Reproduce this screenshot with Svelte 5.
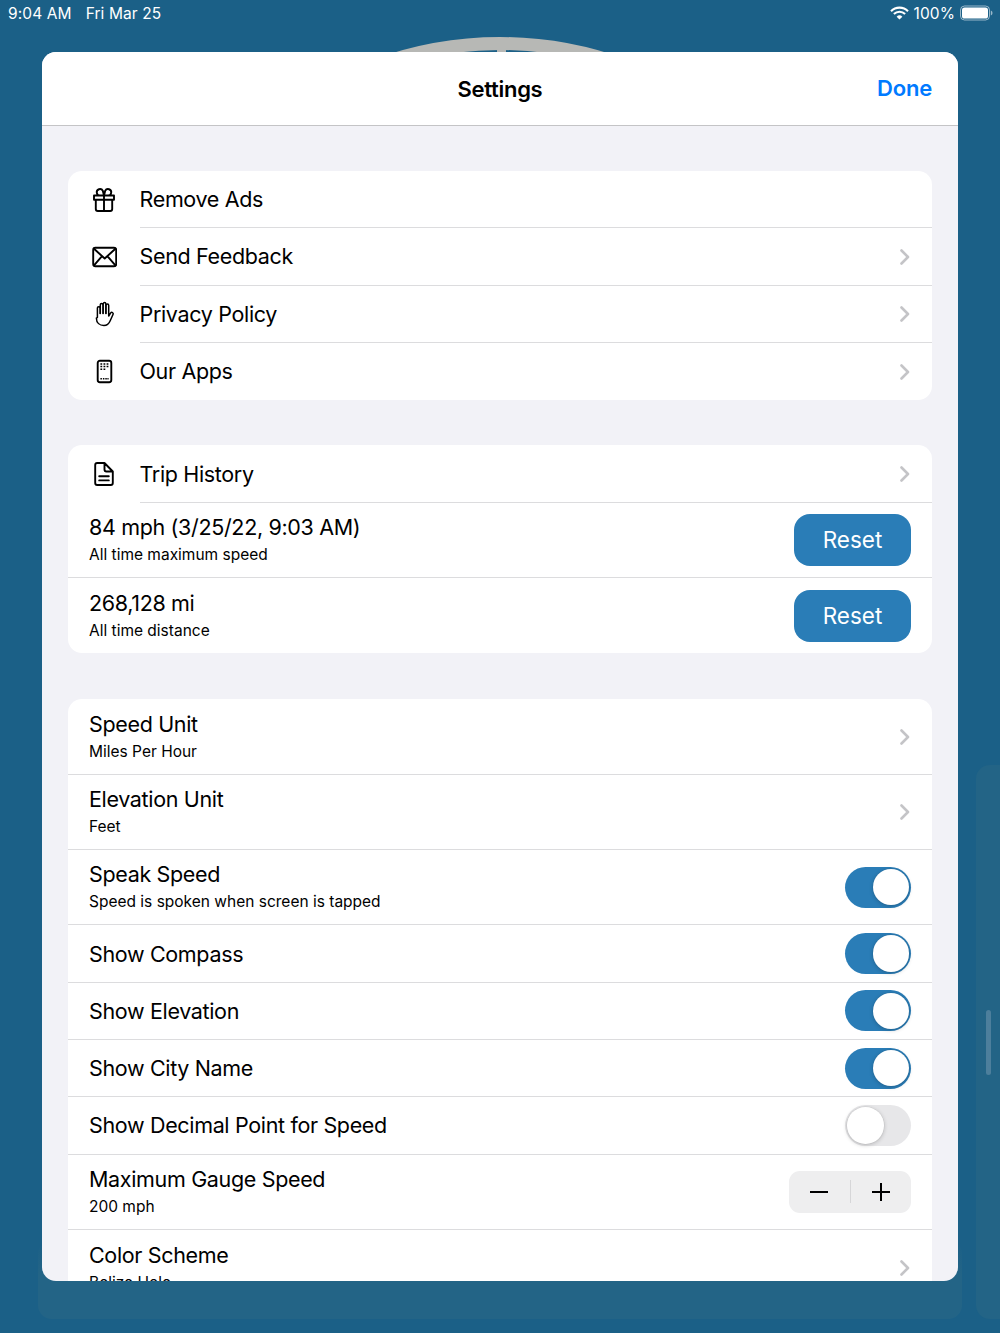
<script>
  const chevron = true;
</script>

<div class="screen">
  <div class="bg-panel"></div>
  <div class="bg-side"></div>
  <div class="scroll-thumb"></div>
  <svg class="gauge" viewBox="0 0 1000 60" width="1000" height="60" aria-hidden="true">
    <circle cx="500" cy="405" r="361.5" fill="none" stroke="#b7b8b5" stroke-width="13" />
    <rect x="497" y="40" width="9" height="20" fill="#b7b8b5" />
  </svg>

  <header class="status">
    <div class="status-left"><span>9:04 AM</span><span>Fri Mar 25</span></div>
    <div class="status-right">
      <svg width="19" height="14" viewBox="0 0 19 14" aria-hidden="true">
        <path d="M1 5.200a12 12 0 0 1 17 0" fill="none" stroke="#fff" stroke-width="2.100" />
        <path d="M3.900 8.100a8 8 0 0 1 11.200 0" fill="none" stroke="#fff" stroke-width="2.100" />
        <path d="M9.500 13.600 6.600 10.700a4.200 4.200 0 0 1 5.800 0z" fill="#fff" />
      </svg>
      <span>100%</span>
      <svg width="33" height="16" viewBox="0 0 33 16" aria-hidden="true">
        <rect x="0.500" y="1" width="29" height="14" rx="4" fill="none" stroke="#fff" stroke-opacity=".55" />
        <rect x="2" y="2.500" width="26" height="11" rx="2.600" fill="#fff" />
        <path d="M30.800 5.500c1.200.4 1.700 1.400 1.700 2.500s-.5 2.100-1.700 2.500z" fill="#fff" fill-opacity=".55" />
      </svg>
    </div>
  </header>

  <main class="sheet">
    <div class="navbar">
      <h1>Settings</h1>
      <button class="done">Done</button>
    </div>
    <div class="content">
      <section class="group first">
        <div class="row icon-row">
          <svg class="ico" viewBox="0 0 26 26" aria-hidden="true">
            <path d="M3 8.500h20v4.200H3zM4.800 12.700v9.300a2 2 0 0 0 2 2h12.400a2 2 0 0 0 2-2v-9.300M13 8.500V24M13 8.500H9a3.200 3.200 0 1 1 2.800-4.700zM13 8.500h4a3.200 3.200 0 1 0-2.800-4.700z" />
          </svg>
          <span class="label">Remove Ads</span>
        </div>
        <div class="row icon-row">
          <svg class="ico" viewBox="0 0 26 26" aria-hidden="true">
            <rect x="2.200" y="3.800" width="23" height="18.400" rx="2.200" />
            <path d="M3 4.800l10.700 9.700 10.700-9.700M3 21.400l7.800-9M24.400 21.400l-7.800-9" />
          </svg>
          <span class="label">Send Feedback</span>
          {#if chevron}{@render chev()}{/if}
        </div>
        <div class="row icon-row">
          <svg class="ico hand" viewBox="0 0 26 26" aria-hidden="true">
            <path d="M6.400 16.500V7a1.300 1.300 0 0 1 2.600 0v5.500M9.300 12.500V3.800a1.300 1.300 0 0 1 2.600 0v8.700M12.200 12.500V2.900a1.300 1.300 0 0 1 2.600 0v9.600M15.100 12.500V4.400a1.300 1.300 0 0 1 2.600 0V15l2-3.100a1.400 1.400 0 0 1 2.400 1.400l-2.900 6.400c-1.200 2.800-3.400 4.800-6.300 4.800-4.300 0-7.500-2.700-7.500-7.300v-.2" />
          </svg>
          <span class="label">Privacy Policy</span>
          {@render chev()}
        </div>
        <div class="row icon-row">
          <svg class="ico" viewBox="0 0 26 26" aria-hidden="true">
            <rect x="6.700" y="1.800" width="13.600" height="21.400" rx="2.200" />
            <path class="fine" d="M9.400 5h1.800M12.500 5h1.800M15.600 5h1.800M9.400 7.600h1.800M12.500 7.600h1.800M15.600 7.600h1.800M9.400 10.200h1.800M12.500 10.200h1.800M9.400 19.800h1.500M11.900 19.800h1.500M14.300 19.800h1.500M16.400 19.800h1.200" />
          </svg>
          <span class="label">Our Apps</span>
          {@render chev()}
        </div>
      </section>

      <section class="group second">
        <div class="row icon-row">
          <svg class="ico" viewBox="0 0 26 26" aria-hidden="true">
            <path d="M6.200 2h7.300l8.300 8.500V22a2 2 0 0 1-2 2H6.200a2 2 0 0 1-2-2V4a2 2 0 0 1 2-2zM13.500 2v6.600a1.900 1.900 0 0 0 1.900 1.900h6.400M8.200 15.200h9.600M8.200 19.400h9.600" />
          </svg>
          <span class="label">Trip History</span>
          {@render chev()}
        </div>
        <div class="row tall">
          <div class="stack"><span class="label">84 mph (3/25/22, 9:03 AM)</span><span class="sub">All time maximum speed</span></div>
          <button class="reset">Reset</button>
        </div>
        <div class="row tall">
          <div class="stack"><span class="label">268,128 mi</span><span class="sub">All time distance</span></div>
          <button class="reset">Reset</button>
        </div>
      </section>

      <section class="group third">
        <div class="row tall">
          <div class="stack"><span class="label">Speed Unit</span><span class="sub">Miles Per Hour</span></div>
          {@render chev()}
        </div>
        <div class="row tall">
          <div class="stack"><span class="label">Elevation Unit</span><span class="sub">Feet</span></div>
          {@render chev()}
        </div>
        <div class="row tall">
          <div class="stack"><span class="label">Speak Speed</span><span class="sub">Speed is spoken when screen is tapped</span></div>
          <span class="switch on"></span>
        </div>
        <div class="row"><span class="label">Show Compass</span><span class="switch on"></span></div>
        <div class="row"><span class="label">Show Elevation</span><span class="switch on"></span></div>
        <div class="row"><span class="label">Show City Name</span><span class="switch on"></span></div>
        <div class="row"><span class="label">Show Decimal Point for Speed</span><span class="switch"></span></div>
        <div class="row tall">
          <div class="stack"><span class="label">Maximum Gauge Speed</span><span class="sub">200 mph</span></div>
          <div class="stepper">
            <svg viewBox="0 0 18 18" width="18" height="18" aria-hidden="true"><path d="M0 9h18" /></svg>
            <i></i>
            <svg viewBox="0 0 18 18" width="18" height="18" aria-hidden="true"><path d="M0 9h18M9 0v18" /></svg>
          </div>
        </div>
        <div class="row tall">
          <div class="stack"><span class="label">Color Scheme</span><span class="sub">Belize Hole</span></div>
          {@render chev()}
        </div>
      </section>
    </div>
  </main>
</div>

{#snippet chev()}
  <svg class="chev" width="10" height="16" viewBox="0 0 10 16" aria-hidden="true"><path d="M1.500 1.500 8 8l-6.500 6.500" /></svg>
{/snippet}

<style>
  :global(body) { margin: 0; }
  .screen {
    position: relative;
    width: 1000px;
    height: 1333px;
    overflow: hidden;
    background: #1b6087;
    font-family: Inter, "Liberation Sans", sans-serif;
    color: #000;
  }
  .bg-panel {
    position: absolute;
    left: 38px; width: 924px; top: 1240px; height: 79px;
    background: linear-gradient(rgba(35,100,134,0), #236486 45%);
    border-radius: 14px;
  }
  .bg-side {
    position: absolute;
    left: 976px; width: 60px; top: 765px; height: 554px;
    background: #236486;
    border-radius: 14px;
  }
  .scroll-thumb {
    position: absolute;
    left: 985.500px; top: 1010px; width: 5px; height: 65px;
    border-radius: 3px;
    background: #4d7f9c;
  }
  .gauge { position: absolute; left: 0; top: 0; }

  .status {
    position: relative;
    height: 26px;
    padding: 0 7px 0 8px;
    display: flex;
    justify-content: space-between;
    align-items: center;
    color: #fff;
    font-size: 15.500px;
    letter-spacing: .1px;
  }
  .status-left { display: flex; gap: 14px; }
  .status-right { display: flex; align-items: center; gap: 5px; }

  .sheet {
    position: absolute;
    left: 42px; top: 52px;
    width: 916px; height: 1229px;
    border-radius: 14px;
    overflow: hidden;
    background: #f2f2f7;
  }
  .navbar {
    height: 73px;
    background: #fff;
    border-bottom: 1px solid #c4c4c6;
    display: flex;
    align-items: center;
    justify-content: center;
    position: relative;
  }
  h1 { margin: 0; font-size: 22px; font-weight: 600; letter-spacing: -.3px; }
  .done {
    position: absolute;
    right: 26px; top: 23px;
    border: 0; padding: 0; background: none;
    font: 600 22px Inter, "Liberation Sans", sans-serif;
    letter-spacing: -.2px;
    color: #007aff;
  }
  .content {
    padding: 45px 26px 0;
    display: flex;
    flex-direction: column;
    gap: 45.500px;
  }
  .group {
    background: #fff;
    border-radius: 14px;
    overflow: hidden;
  }
  .group.second { margin-top: -.4px; }
  .group.third { margin-top: .8px; }
  .row {
    position: relative;
    height: 57.300px;
    box-sizing: border-box;
    padding: 0 21px;
    display: flex;
    align-items: center;
    justify-content: space-between;
    border-bottom: 1px solid #dcdcde;
  }
  .group .row:last-child { border-bottom: 0; }
  .row.tall { height: 75.300px; }
  .icon-row { padding-left: 71.500px; justify-content: flex-start; }
  .icon-row .chev { margin-left: auto; }
  .group.first .label { margin-top: -1px; }
  .icon-row:not(:last-child) { border-bottom: 0; }
  .icon-row:not(:last-child)::after {
    content: "";
    position: absolute;
    left: 71.500px; right: 0; bottom: 0;
    height: 1px;
    background: #dcdcde;
  }
  .group.second .icon-row::after { left: 0; right: 0; }
  .group.second .icon-row::after { left: 71.500px; }
  .ico {
    position: absolute;
    left: 23px; top: 50%;
    width: 26px; height: 26px;
    margin-top: -13px;
    fill: none;
    stroke: #000;
    stroke-width: 1.900;
    stroke-linejoin: round;
    stroke-linecap: round;
  }
  .ico.hand { stroke-width: 1.500; }
  .ico .fine { stroke-width: 1.500; stroke-linecap: butt; }
  .label { font-size: 21.500px; line-height: 28px; letter-spacing: -.34px; }
  .stack { display: flex; flex-direction: column; padding-bottom: 2px; }
  .sub { font-size: 15.500px; line-height: 20px; margin-top: 4px; }
  .chev {
    flex: none;
    margin-right: 1px;
    fill: none;
    stroke: #c4c4c7;
    stroke-width: 2.600;
    stroke-linecap: round;
    stroke-linejoin: round;
  }
  .reset {
    width: 117px; height: 52px;
    border: 0; padding: 0;
    border-radius: 16px;
    background: #2a7db7;
    color: #fff;
    font: 400 22.500px Inter, "Liberation Sans", sans-serif;
  }
  .switch {
    position: relative;
    width: 66px; height: 41px;
    border-radius: 21px;
    background: #e7e7e9;
    flex: none;
  }
  .switch::after {
    content: "";
    position: absolute;
    left: 2px; top: 2.250px;
    width: 36.500px; height: 36.500px;
    border-radius: 50%;
    background: #fff;
    box-shadow: 0 1px 4px rgba(0,0,0,.22), 0 0 0 .5px rgba(0,0,0,.06);
  }
  .switch.on { background: #2a7db7; }
  .switch.on::after { left: 27.500px; }
  .stepper {
    width: 122px; height: 42px;
    border-radius: 11px;
    background: #eeeeef;
    display: flex;
    align-items: center;
    justify-content: space-between;
    padding: 0 21px 0 21px;
    box-sizing: border-box;
  }
  .stepper i { width: 1px; height: 23px; background: #d6d6d8; }
  .stepper svg { fill: none; stroke: #000; stroke-width: 2; }
</style>
